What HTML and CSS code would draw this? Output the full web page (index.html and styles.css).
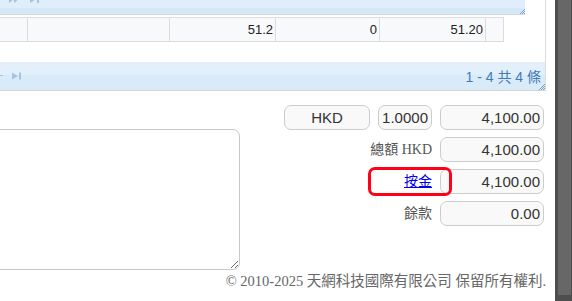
FILE: index.html
```html
<!DOCTYPE html>
<html lang="zh-Hant">
<head>
<meta charset="utf-8">
<title>按金</title>
<link rel="stylesheet" href="styles.css">
</head>
<body>
<div class="page">
  <div class="main">
    <div class="grid-panel">
      <div class="inner">
        <div class="toolbar">
          <svg class="pg-icons top-icons" width="40" height="10" viewBox="0 0 40 10"><path d="M9 1l5 4-5 4zM14 1l5 4-5 4z"/><path d="M30 1l6 4-6 4z"/><rect x="37" y="1" width="2" height="8"/></svg>
          <svg class="grip grip-inner" width="5" height="5" viewBox="0 0 5 5"><path d="M5 0L0 5M5 2L2 5M5 4L4 5"/></svg>
        </div>
        <div class="row-table">
          <div class="cell"></div>
          <div class="cell"></div>
          <div class="cell">51.2</div>
          <div class="cell">0</div>
          <div class="cell">51.20</div>
          <div class="cell"></div>
        </div>
      </div>
      <div class="pager">
        <svg class="pg-icons" width="24" height="10" viewBox="0 0 24 10"><rect x="0" y="4" width="3" height="1"/><path d="M12 1.5l6 3.5-6 3.5z"/><rect x="19" y="1.5" width="2" height="7"/></svg>
        <span class="pg-info">1 - 4 共 4 條</span>
        <svg class="grip grip-outer" width="6" height="6" viewBox="0 0 6 6"><path d="M6 0L0 6M6 2L2 6M6 4L4 6"/></svg>
      </div>
    </div>

    <div class="form">
      <textarea class="notes"></textarea>
      <div class="fields">
        <input class="field center" type="text" value="HKD" readonly>
        <input class="field" type="text" value="1.0000" readonly>
        <input class="field" type="text" value="4,100.00" readonly>

        <span class="label">總額 HKD</span>
        <input class="field" type="text" value="4,100.00" readonly>

        <span class="label deposit"><a href="#" class="link">按金</a><span class="ring"></span></span>
        <input class="field" type="text" value="4,100.00" readonly>

        <span class="label">餘款</span>
        <input class="field" type="text" value="0.00" readonly>
      </div>
    </div>

    <p class="footer">© 2010-2025 天網科技國際有限公司 保留所有權利.</p>
  </div>
  <div class="scrollbar"><div class="thumb"></div></div>
</div>
</body>
</html>
```

FILE: styles.css
```css
html, body {
  margin: 0;
  padding: 0;
  background: #fff;
}

body {
  font-family: "Liberation Serif", "Noto Sans CJK TC", serif;
  font-size: 14px;
  color: #333;
}

.page {
  display: flex;
  width: 572px;
  height: 301px;
  overflow: hidden;
}

.main {
  width: 555px;
  flex: none;
}

/* grid panel */
.grid-panel {
  position: relative;
  width: 546px;
  height: 91px;
  box-sizing: border-box;
  border-right: 1px solid #dcdcdc;
  border-bottom: 1px solid #d4d4d4;
  display: flex;
  flex-direction: column;
}

.inner {
  width: 525px;
}

.toolbar {
  position: relative;
  height: 14px;
  border-bottom: 1px solid #cfdae5;
  background: linear-gradient(#dfeefa 0, #dfeefa 55%, #d6e8f6 55%, #d6e8f6 100%);
  display: flex;
  align-items: flex-start;
  overflow: hidden;
}

.pg-icons {
  fill: #a7c3de;
  flex: none;
}

.top-icons {
  margin-top: -6px;
}

.grip {
  position: absolute;
  right: 0;
  bottom: 0;
  stroke: #7ea2c6;
  stroke-width: 1;
  fill: none;
}

.row-table {
  margin-top: 2px;
  width: 504px;
  display: grid;
  grid-template-columns: 28px 142px 106px 104px 106px 18px;
  background: #f8f9fb;
  border-top: 1px solid #dcdcdc;
  border-bottom: 1px solid #dcdcdc;
}

.cell {
  box-sizing: border-box;
  height: 23px;
  line-height: 23px;
  border-right: 1px solid #dcdcdc;
  padding-right: 2px;
  text-align: right;
  font-family: "Liberation Sans", "Noto Sans CJK TC", sans-serif;
  font-size: 13px;
  color: #222;
}

.pager {
  position: relative;
  margin-top: 20px;
  height: 28px;
  display: flex;
  align-items: center;
  justify-content: space-between;
  padding-right: 4px;
  background: linear-gradient(#e3f0fb 0, #e3f0fb 47%, #d9eaf8 47%, #d9eaf8 100%);
}

.pg-info {
  font-family: "Liberation Sans", "Noto Sans CJK TC", sans-serif;
  font-size: 14px;
  color: #3f7bb7;
}

/* form */
.form {
  display: flex;
  align-items: flex-start;
}

.notes {
  flex: none;
  margin: 38px 0 0 -10px;
  width: 250px;
  height: 141px;
  box-sizing: border-box;
  border: 1px solid #c8c8c8;
  border-radius: 7px;
  background: #fff;
  padding: 4px;
  font: inherit;
}

.fields {
  margin: 14px 11px 0 auto;
  display: grid;
  grid-template-columns: 86px 54px 104px;
  grid-auto-rows: 25px;
  column-gap: 8px;
  row-gap: 7px;
}

.field {
  width: 100%;
  height: 25px;
  box-sizing: border-box;
  margin: 0;
  border: 1px solid #cccccc;
  border-radius: 7px;
  background: #f9f9f9;
  padding: 0 3px;
  text-align: right;
  font-family: "Liberation Sans", "Noto Sans CJK TC", sans-serif;
  font-size: 15px;
  color: #333;
  outline: none;
}

.field.center {
  text-align: center;
}

.label {
  grid-column: 1 / 3;
  justify-self: end;
  align-self: stretch;
  line-height: 25px;
  color: #555;
  font-size: 14px;
}

.deposit {
  position: relative;
}

.link {
  color: #0000ee;
  text-decoration: underline;
}

.ring {
  position: absolute;
  left: -36px;
  right: -20px;
  top: -2px;
  bottom: -2px;
  border: 3px solid #ff0018;
  border-radius: 7px;
  pointer-events: none;
}

.footer {
  margin: 3px 9px 0 0;
  text-align: right;
  font-size: 14.5px;
  line-height: 16px;
  color: #666;
}

/* right scrollbar strip */
.scrollbar {
  width: 17px;
  height: 301px;
  flex: none;
  background: #4e4e4e;
  box-sizing: border-box;
  padding: 0 1px 0 3px;
}

.thumb {
  height: 295px;
  background: #676767;
}
```
